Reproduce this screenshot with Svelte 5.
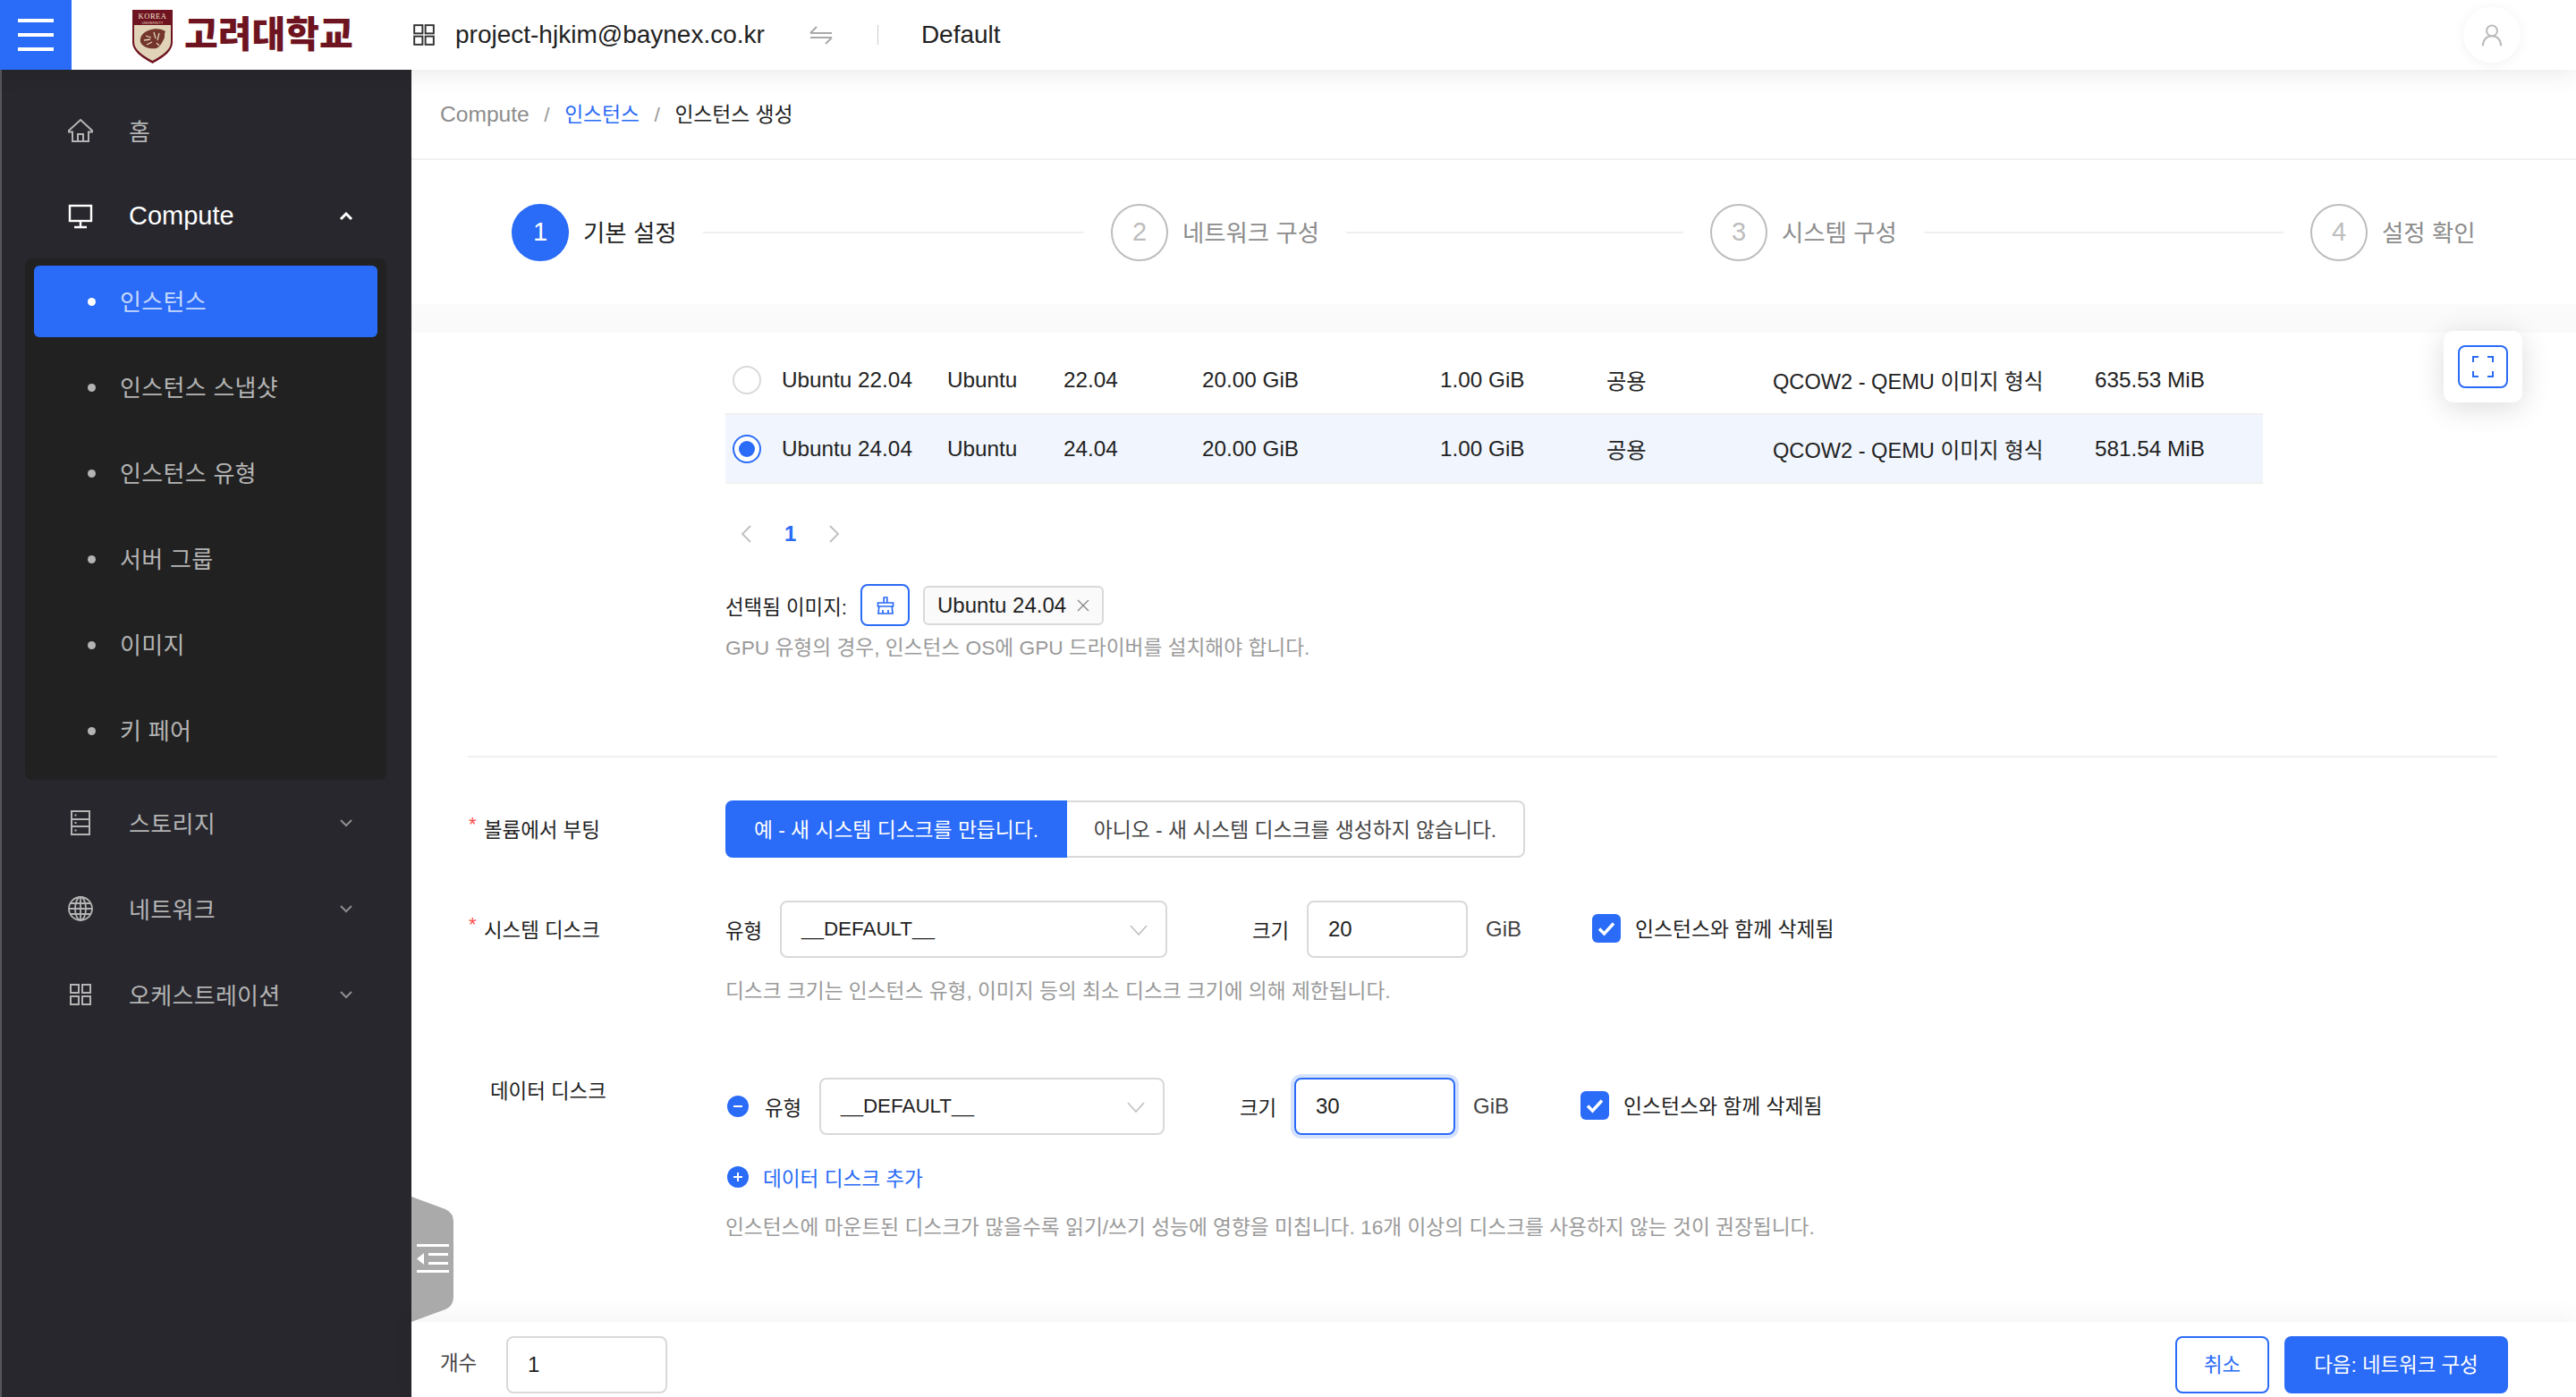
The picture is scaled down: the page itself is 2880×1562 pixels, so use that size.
<script lang="ts">
	const subItems = ['인스턴스', '인스턴스 스냅샷', '인스턴스 유형', '서버 그룹', '이미지', '키 페어'];

	const steps = [
		{ n: 1, label: '기본 설정' },
		{ n: 2, label: '네트워크 구성' },
		{ n: 3, label: '시스템 구성' },
		{ n: 4, label: '설정 확인' }
	];

	const images = [
		{ name: 'Ubuntu 22.04', os: 'Ubuntu', ver: '22.04', disk: '20.00 GiB', mem: '1.00 GiB', vis: '공용', format: 'QCOW2 - QEMU 이미지 형식', size: '635.53 MiB', checked: false },
		{ name: 'Ubuntu 24.04', os: 'Ubuntu', ver: '24.04', disk: '20.00 GiB', mem: '1.00 GiB', vis: '공용', format: 'QCOW2 - QEMU 이미지 형식', size: '581.54 MiB', checked: true }
	];
</script>

{#snippet chevron(up: boolean)}
	<svg class="chev" class:chev--up={up} viewBox="0 0 16 10" fill="none" stroke="currentColor" stroke-width="2"><path d={up ? 'M2 8l6-6 6 6' : 'M2 2l6 6 6-6'} /></svg>
{/snippet}

{#snippet appsIcon()}
	<svg class="menu-icon" viewBox="0 0 28 28" fill="none" stroke="currentColor" stroke-width="2"><rect x="3" y="3" width="9" height="9" /><rect x="16" y="3" width="9" height="9" /><rect x="3" y="16" width="9" height="9" /><rect x="16" y="16" width="9" height="9" /></svg>
{/snippet}

{#snippet checkbox()}
	<span class="checkbox"><svg viewBox="0 0 32 32" fill="none" stroke="#fff" stroke-width="3.4"><path d="M8 16.5l5.5 5.5L24 10.5" /></svg></span>
{/snippet}

{#snippet selectBox(cls: string)}
	<div class="select {cls}">
		<span>__DEFAULT__</span>
		<svg viewBox="0 0 20 12" fill="none" stroke="#bfbfbf" stroke-width="1.6"><path d="M1 1l9 10 9-10" /></svg>
	</div>
{/snippet}

<div class="page">
	<header class="topbar">
		<button class="burger" aria-label="menu"><i></i><i></i><i></i></button>
		<div class="logo">
			<svg class="shield" viewBox="0 0 45 60">
				<path d="M0 0H45V36C45 47 33 54 22.500 60C12 54 0 47 0 36Z" fill="#6e1420" />
				<path d="M2 17H43V36C43 45.500 32 51.500 22.500 57C13 51.500 2 45.500 2 36Z" fill="#e0d3b8" />
				<text x="22.500" y="10" text-anchor="middle" class="shield-korea">KOREA</text>
				<text x="22.500" y="15.500" text-anchor="middle" class="shield-univ">UNIVERSITY</text>
				<path d="M9 36C8 30 12 25 18 23C25 20 33 21 37 24C35 27 37 30 35 33C33 37 31 41 27 43C22 44 12 43 9 36Z" fill="#74352c" />
				<path d="M15 29l6 2M13 34l7-1M16 39l6-3M24 25l2 7M30 26l-2 8M27 37l3 3" stroke="#e0d3b8" stroke-width="1.300" fill="none" />
			</svg>
			<span class="wordmark">고려대학교</span>
		</div>
		<svg class="project-icon" viewBox="0 0 24 24" fill="none" stroke="#333" stroke-width="1.800"><rect x="2" y="2" width="8.500" height="8.500" /><rect x="13.500" y="2" width="8.500" height="8.500" /><rect x="2" y="13.500" width="8.500" height="8.500" /><rect x="13.500" y="13.500" width="8.500" height="8.500" /></svg>
		<span class="project">project-hjkim@baynex.co.kr</span>
		<svg class="swap" viewBox="0 0 26 22" fill="none" stroke="#aaa" stroke-width="2"><path d="M1 9H25M1 9L8 2M25 14H1M25 14l-7 7" /></svg>
		<span class="bar-sep"></span>
		<span class="domain">Default</span>
		<span class="avatar">
			<svg viewBox="0 0 28 32" fill="none" stroke="#bbb" stroke-width="2.400"><circle cx="14" cy="10" r="7" /><path d="M2 30c0-8 5-13 12-13s12 5 12 13" /></svg>
		</span>
	</header>

	<div class="body">
		<aside class="sidebar">
			<div class="menu-item home">
				<svg class="menu-icon" viewBox="0 0 28 28" fill="none" stroke="currentColor" stroke-width="2"><path d="M14 2L27 14v1.500h-4V26H5V15.500H1V14ZM11 26v-8h6v8" /></svg>
				<span>홈</span>
			</div>
			<div class="menu-item compute">
				<svg class="menu-icon" viewBox="0 0 28 28" fill="none" stroke="currentColor" stroke-width="2.400"><rect x="2" y="2" width="24" height="17" /><path d="M14 19v6M7 26h14" /></svg>
				<span>Compute</span>
				{@render chevron(true)}
			</div>
			<ul class="submenu">
				{#each subItems as item, i (item)}
					<li class="sub-item" class:sub-item--active={i === 0}><i class="dot"></i>{item}</li>
				{/each}
			</ul>
			<div class="menu-item">
				<svg class="menu-icon" viewBox="0 0 28 28" fill="none" stroke="currentColor" stroke-width="2"><rect x="4" y="1" width="20" height="26" /><path d="M4 10h20M4 18h20M7.500 5.500h2M7.500 14h2M7.500 22.500h2" /></svg>
				<span>스토리지</span>
				{@render chevron(false)}
			</div>
			<div class="menu-item">
				<svg class="menu-icon" viewBox="0 0 28 28" fill="none" stroke="currentColor" stroke-width="1.800"><circle cx="14" cy="14" r="13" /><ellipse cx="14" cy="14" rx="6" ry="13" /><path d="M14 1v26M1 14h26M3 8h22M3 20h22" /></svg>
				<span>네트워크</span>
				{@render chevron(false)}
			</div>
			<div class="menu-item">
				{@render appsIcon()}
				<span>오케스트레이션</span>
				{@render chevron(false)}
			</div>
		</aside>

		<main class="main">
			<nav class="crumbs">
				<span class="crumb-muted">Compute</span>
				<span class="crumb-sep">/</span>
				<span class="crumb-link">인스턴스</span>
				<span class="crumb-sep">/</span>
				<span>인스턴스 생성</span>
			</nav>

			<div class="steps">
				{#each steps as step (step.n)}
					<div class="step" class:step--active={step.n === 1}>
						<span class="step-num">{step.n}</span>
						<span class="step-label">{step.label}</span>
						{#if step.n < 4}<span class="step-line"></span>{/if}
					</div>
				{/each}
			</div>
			<div class="band"></div>

			<div class="content">
				<div class="image-block">
					{#each images as img (img.name)}
						<div class="img-row" class:img-row--selected={img.checked}>
							<span class="radio" class:radio--on={img.checked}></span>
							<span>{img.name}</span>
							<span>{img.os}</span>
							<span>{img.ver}</span>
							<span>{img.disk}</span>
							<span>{img.mem}</span>
							<span>{img.vis}</span>
							<span class="img-format">{img.format}</span>
							<span>{img.size}</span>
						</div>
					{/each}

					<div class="pager">
						<svg viewBox="0 0 14 22" fill="none" stroke="#bfbfbf" stroke-width="1.800"><path d="M12 2L3 11l9 9" /></svg>
						<span>1</span>
						<svg viewBox="0 0 14 22" fill="none" stroke="#bfbfbf" stroke-width="1.800"><path d="M2 2l9 9-9 9" /></svg>
					</div>

					<div class="selected">
						<span class="selected-label">선택됨 이미지:</span>
						<button class="clear-btn" aria-label="clear">
							<svg viewBox="0 0 20 20" fill="none" stroke="#2a6bf7" stroke-width="1.700"><path d="M8.200 7V1h3.600v6M1.500 7h17v4h-17zM2.800 11L2 19h16l-.8-8M7 19v-4M13 19v-4" /></svg>
						</button>
						<span class="tag">Ubuntu 24.04
							<svg viewBox="0 0 14 14" stroke="#888" stroke-width="1.400"><path d="M1 1l12 12M13 1L1 13" /></svg>
						</span>
					</div>
					<p class="help help--gpu">GPU 유형의 경우, 인스턴스 OS에 GPU 드라이버를 설치해야 합니다.</p>
				</div>

				<div class="divider"></div>

				<div class="form-row form-row--boot">
					<label class="req">볼륨에서 부팅</label>
					<div class="radio-group">
						<span class="seg seg--on">예 - 새 시스템 디스크를 만듭니다.</span>
						<span class="seg">아니오 - 새 시스템 디스크를 생성하지 않습니다.</span>
					</div>
				</div>

				<div class="form-row form-row--system">
					<label class="req">시스템 디스크</label>
					<div class="disk">
						<span class="disk-label">유형</span>
						{@render selectBox('select--system')}
						<span class="disk-label size-label">크기</span>
						<div class="input">20</div>
						<span class="unit">GiB</span>
						{@render checkbox()}
						<span class="check-label">인스턴스와 함께 삭제됨</span>
					</div>
					<p class="help help--system">디스크 크기는 인스턴스 유형, 이미지 등의 최소 디스크 크기에 의해 제한됩니다.</p>
				</div>

				<div class="form-row form-row--data">
					<label class="plain">데이터 디스크</label>
					<div class="disk disk--data">
						<span class="round"><i></i></span>
						<span class="disk-label">유형</span>
						{@render selectBox('select--data')}
						<span class="disk-label size-label">크기</span>
						<div class="input input--focus">30</div>
						<span class="unit">GiB</span>
						{@render checkbox()}
						<span class="check-label">인스턴스와 함께 삭제됨</span>
					</div>
					<div class="add-disk"><span class="round round--plus"><i></i></span>데이터 디스크 추가</div>
					<p class="help help--data">인스턴스에 마운트된 디스크가 많을수록 읽기/쓰기 성능에 영향을 미칩니다. 16개 이상의 디스크를 사용하지 않는 것이 권장됩니다.</p>
				</div>
			</div>

			<footer class="footer">
				<span class="count-label">개수</span>
				<div class="input input--count">1</div>
				<button class="btn btn--ghost">취소</button>
				<button class="btn btn--primary">다음: 네트워크 구성</button>
			</footer>

			<svg class="collapse" viewBox="0 0 47 140">
				<path d="M0 0L38 14Q47 18 47 28V112Q47 122 38 126L0 140Z" fill="#aaa" />
				<path d="M6 54.500H42M19 64.500H41M19 74.500H41M6 83.500H42" stroke="#fff" stroke-width="3" />
				<path d="M6 69.500l8-6.500v13z" fill="#fff" />
			</svg>

			<div class="float-card">
				<button class="float-btn" aria-label="fullscreen">
					<svg viewBox="0 0 24 24" fill="none" stroke="#2a6bf7" stroke-width="2"><path d="M1 7V1h6M17 1h6v6M23 17v6h-6M7 23H1v-6" /></svg>
				</button>
			</div>
		</main>
	</div>
</div>

<style>
	:global(body) {
		margin: 0;
		background: #fff;
	}
	.page {
		width: 2880px;
		height: 1562px;
		display: flex;
		flex-direction: column;
		overflow: hidden;
		font-family: 'Liberation Sans', 'Noto Sans CJK KR', sans-serif;
		font-size: 24.300px;
		color: #222;
	}
	.topbar {
		height: 78px;
		flex-shrink: 0;
		display: flex;
		align-items: center;
		background: #fff;
		position: relative;
		z-index: 2;
		box-shadow: 0 4px 28px rgba(0, 0, 0, 0.09);
		font-size: 28px;
	}
	.burger {
		width: 80px;
		height: 78px;
		flex-shrink: 0;
		border: none;
		padding: 0 20px;
		background: #2a6bf7;
		display: flex;
		flex-direction: column;
		justify-content: center;
		gap: 12px;
	}
	.burger i {
		display: block;
		height: 4px;
		background: #fff;
	}
	.logo {
		display: flex;
		align-items: center;
		gap: 13px;
		margin-left: 68px;
		width: 313px;
		flex-shrink: 0;
	}
	.shield {
		width: 45px;
		height: 60px;
		margin-top: 4px;
		flex-shrink: 0;
	}
	.shield-korea {
		font-size: 8.500px;
		fill: #f0e6d2;
		font-family: 'Liberation Serif', serif;
		letter-spacing: 0.5px;
	}
	.shield-univ {
		font-size: 4px;
		fill: #e0d3b8;
		font-family: 'Liberation Sans', sans-serif;
	}
	.wordmark {
		font-size: 41px;
		font-weight: 900;
		color: #6e1420;
		line-height: 1;
		white-space: nowrap;
	}
	.project-icon {
		width: 26px;
		height: 26px;
		flex-shrink: 0;
	}
	.project {
		margin-left: 22px;
	}
	.swap {
		width: 26px;
		height: 22px;
		margin-left: 50px;
	}
	.bar-sep {
		width: 1px;
		height: 22px;
		background: #ccc;
		margin-left: 50px;
	}
	.domain {
		margin-left: 48px;
	}
	.avatar {
		width: 64px;
		height: 62px;
		border-radius: 50%;
		margin-left: auto;
		margin-right: 62px;
		display: flex;
		align-items: center;
		justify-content: center;
		box-shadow: 0 2px 14px rgba(0, 0, 0, 0.06);
	}
	.avatar svg {
		width: 24px;
		height: 27px;
	}
	.body {
		flex: 1;
		display: flex;
		min-height: 0;
	}
	.sidebar {
		width: 458px;
		flex-shrink: 0;
		background: #27272d;
		border-left: 2px solid #55555c;
		color: #b4b4b4;
		font-size: 26px;
		padding-top: 20px;
		box-sizing: content-box;
	}
	.menu-item {
		height: 96px;
		display: flex;
		align-items: center;
		position: relative;
		padding-left: 74px;
		letter-spacing: 0.3px;
	}
	.menu-item > span {
		padding-bottom: 2px;
	}
	.menu-icon {
		width: 28px;
		height: 28px;
		flex-shrink: 0;
		margin-right: 40px;
	}
	.compute {
		color: #fff;
		font-size: 29px;
		letter-spacing: 0;
	}
	.chev {
		position: absolute;
		left: 377px;
		width: 16px;
		height: 10px;
		color: #8f8f8f;
	}
	.chev--up {
		color: #fff;
		stroke-width: 3;
	}
	.submenu {
		list-style: none;
		margin: -1px 26px 0;
		padding: 8px 10px 15px;
		background: #212121;
		border-radius: 8px;
		width: 384px;
	}
	.sub-item {
		height: 80px;
		margin-bottom: 16px;
		display: flex;
		align-items: center;
		padding: 0 0 3px 96px;
		box-sizing: border-box;
		border-radius: 6px;
		position: relative;
		letter-spacing: 0.3px;
	}
	.sub-item:last-child {
		margin-bottom: 0;
	}
	.sub-item--active {
		background: #2a6bf7;
		color: #c6d9fd;
	}
	.sub-item--active .dot {
		background: #fff;
	}
	.dot {
		position: absolute;
		left: 60px;
		top: 36px;
		width: 9px;
		height: 9px;
		border-radius: 50%;
		background: #b4b4b4;
	}
	.main {
		flex: 1;
		min-width: 0;
		display: flex;
		flex-direction: column;
		position: relative;
	}
	.crumbs {
		height: 101px;
		flex-shrink: 0;
		box-sizing: border-box;
		border-bottom: 2px solid #f0f0f0;
		padding: 30px 32px 0;
		display: flex;
		gap: 16.500px;
		font-size: 22.800px;
		line-height: 40px;
		color: #222;
	}
	.crumb-muted {
		font-size: 24.600px;
		color: #8c8c8c;
	}
	.crumb-sep {
		color: #999;
	}
	.crumb-link {
		color: #2a6bf7;
	}
	.steps {
		height: 161px;
		flex-shrink: 0;
		box-sizing: border-box;
		padding: 0 113px 0 112px;
		display: grid;
		grid-template-columns: 670px 670px 671px auto;
		align-items: center;
	}
	.step {
		display: flex;
		align-items: center;
		font-size: 26.400px;
		color: #8c8c8c;
	}
	.step-num {
		width: 64px;
		height: 64px;
		box-sizing: border-box;
		border-radius: 50%;
		border: 2px solid #bdbdbd;
		display: flex;
		align-items: center;
		justify-content: center;
		color: #bdbdbd;
		font-size: 29px;
		flex-shrink: 0;
	}
	.step-label {
		margin-left: 16px;
		padding-bottom: 2px;
		white-space: nowrap;
	}
	.step-line {
		flex: 1;
		height: 2px;
		background: #f0f0f0;
		margin: 0 30px;
	}
	.step--active {
		color: #222;
	}
	.step--active .step-num {
		background: #2a6bf7;
		border-color: #2a6bf7;
		color: #fff;
	}
	.band {
		height: 32px;
		flex-shrink: 0;
		background: #fafafa;
	}
	.content {
		flex: 1;
		min-height: 0;
		overflow: hidden;
		padding-top: 15px;
	}
	.image-block {
		margin-left: 351px;
		width: 1719px;
	}
	.img-row {
		height: 77px;
		box-sizing: border-box;
		display: grid;
		grid-template-columns: 63px 185px 130px 155px 266px 186px 186px 360px 1fr;
		align-items: center;
		border-bottom: 2px solid #f0f0f0;
		white-space: nowrap;
	}
	.img-row--selected {
		background: #f1f6fe;
	}
	.img-format {
		font-size: 23.600px;
	}
	.radio {
		width: 32px;
		height: 32px;
		margin-left: 8px;
		box-sizing: border-box;
		border: 2px solid #d9d9d9;
		border-radius: 50%;
		background: #fff;
		position: relative;
	}
	.radio--on {
		border-color: #2a6bf7;
	}
	.radio--on::after {
		content: '';
		position: absolute;
		inset: 5px;
		border-radius: 50%;
		background: #2a6bf7;
	}
	.pager {
		height: 40px;
		margin-top: 36px;
		padding-left: 16px;
		display: flex;
		align-items: center;
		gap: 36px;
		color: #2a6bf7;
		font-weight: 700;
		font-size: 24px;
	}
	.pager svg {
		width: 14px;
		height: 22px;
	}
	.selected {
		margin-top: 36px;
		height: 47px;
		display: flex;
		align-items: center;
	}
	.selected-label {
		font-size: 22.400px;
		width: 151px;
		white-space: nowrap;
	}
	.clear-btn {
		width: 55px;
		height: 47px;
		padding: 0;
		background: #fff;
		border: 2px solid #2a6bf7;
		border-radius: 8px;
		display: flex;
		align-items: center;
		justify-content: center;
	}
	.clear-btn svg {
		width: 20px;
		height: 20px;
	}
	.tag {
		margin-left: 15px;
		width: 202px;
		height: 44px;
		box-sizing: border-box;
		padding: 0 14px;
		display: flex;
		align-items: center;
		justify-content: space-between;
		background: #fafafa;
		border: 2px solid #d9d9d9;
		border-radius: 6px;
		white-space: nowrap;
		font-size: 24px;
	}
	.tag svg {
		width: 14px;
		height: 14px;
	}
	.help {
		margin: 0;
		font-size: 22.700px;
		line-height: 32px;
		color: #9a9a9a;
		white-space: nowrap;
	}
	.help--gpu {
		margin-top: 8px;
	}
	.divider {
		height: 2px;
		margin: 105px 88px 0 63px;
		background: #f0f0f0;
	}
	.form-row {
		display: grid;
		grid-template-columns: 287px 1fr;
		padding-left: 64px;
		font-size: 22.400px;
		align-items: center;
	}
	.form-row > .help,
	.form-row > .add-disk {
		grid-column: 2;
	}
	.form-row label {
		white-space: nowrap;
		padding-bottom: 3px;
	}
	.req {
		position: relative;
		padding-left: 17px;
	}
	.req::before {
		content: '*';
		position: absolute;
		left: 0;
		top: -1px;
		color: #ff4d4f;
		font-size: 22px;
	}
	.plain {
		padding-left: 24px;
		padding-top: 2px;
		align-self: start;
		line-height: 28px;
	}
	.form-row--boot {
		margin-top: 48px;
		height: 64px;
	}
	.form-row--system {
		margin-top: 48px;
	}
	.form-row--data {
		margin-top: 81px;
	}
	.radio-group {
		display: flex;
		height: 64px;
		font-size: 22.800px;
	}
	.seg {
		height: 64px;
		box-sizing: border-box;
		display: flex;
		align-items: center;
		justify-content: center;
		border: 2px solid #d9d9d9;
		border-left: none;
		border-radius: 0 8px 8px 0;
		width: 512px;
		white-space: nowrap;
		color: #444;
		padding-bottom: 2px;
	}
	.seg--on {
		width: 382px;
		background: #2a6bf7;
		border: none;
		border-radius: 8px 0 0 8px;
		color: #fff;
	}
	.disk {
		display: flex;
		align-items: center;
		height: 64px;
		white-space: nowrap;
	}
	.disk-label {
		width: 40px;
		flex-shrink: 0;
		margin-right: 21px;
	}
	.select {
		height: 64px;
		box-sizing: border-box;
		border: 2px solid #d9d9d9;
		border-radius: 8px;
		padding: 0 20px 0 22px;
		display: flex;
		align-items: center;
		justify-content: space-between;
		flex-shrink: 0;
		background: #fff;
	}
	.select svg {
		width: 20px;
		height: 12px;
		margin-top: 2px;
	}
	.select--system {
		width: 433px;
	}
	.select--data {
		width: 386px;
	}
	.size-label {
		margin-left: 95px;
	}
	.disk--data .size-label {
		margin-left: 84px;
	}
	.input {
		width: 180px;
		height: 64px;
		box-sizing: border-box;
		border: 2px solid #d9d9d9;
		border-radius: 8px;
		padding-left: 22px;
		display: flex;
		align-items: center;
		flex-shrink: 0;
		font-size: 24px;
	}
	.input--focus {
		border-color: #2a6bf7;
		box-shadow: 0 0 0 4px #d4e2fd;
	}
	.unit {
		margin-left: 20px;
		width: 119px;
		flex-shrink: 0;
		font-size: 24px;
		color: #444;
	}
	.disk--data .unit {
		width: 120px;
	}
	.checkbox {
		width: 32px;
		height: 32px;
		flex-shrink: 0;
		margin-bottom: 3px;
		border-radius: 6px;
		background: #2a6bf7;
	}
	.checkbox svg {
		display: block;
		width: 32px;
		height: 32px;
	}
	.check-label {
		margin-left: 16px;
		padding-bottom: 4px;
		font-size: 22.800px;
	}
	.help--system {
		margin-top: 21px;
	}
	.round {
		width: 24px;
		height: 24px;
		border-radius: 50%;
		background: #2a6bf7;
		margin: 0 18px 0 2px;
		position: relative;
		flex-shrink: 0;
	}
	.round i::before,
	.round--plus i::after {
		content: '';
		position: absolute;
		background: #fff;
		left: 7px;
		top: 11px;
		width: 10px;
		height: 2px;
	}
	.round--plus i::after {
		left: 11px;
		top: 7px;
		width: 2px;
		height: 10px;
	}
	.add-disk {
		margin-top: 31px;
		height: 32px;
		display: flex;
		align-items: center;
		color: #2a6bf7;
		font-size: 22.600px;
	}
	.add-disk .round {
		margin-right: 16px;
	}
	.help--data {
		margin-top: 24px;
	}
	.footer {
		height: 84px;
		flex-shrink: 0;
		box-sizing: border-box;
		padding: 16px 76px 0 32px;
		background: #fff;
		display: flex;
		align-items: flex-start;
		position: relative;
		box-shadow: 0 -6px 24px rgba(0, 0, 0, 0.05);
		font-size: 24px;
	}
	.count-label {
		width: 74px;
		line-height: 62px;
		font-size: 22.400px;
		color: #444;
	}
	.btn {
		height: 64px;
		box-sizing: border-box;
		border-radius: 8px;
		font-family: inherit;
		font-size: 22.400px;
		padding: 0 0 4px;
	}
	.btn--ghost {
		margin-left: auto;
		width: 105px;
		background: #fff;
		border: 2px solid #2a6bf7;
		color: #2a6bf7;
	}
	.btn--primary {
		margin-left: 17px;
		width: 250px;
		background: #2a6bf7;
		border: none;
		color: #fff;
	}
	.collapse {
		position: absolute;
		left: 0;
		top: 1260px;
		width: 47px;
		height: 140px;
		z-index: 1;
	}
	.float-card {
		position: absolute;
		left: 2272px;
		top: 292px;
		width: 88px;
		height: 80px;
		background: #fff;
		border-radius: 10px;
		display: flex;
		align-items: center;
		justify-content: center;
		box-shadow: 0 6px 32px rgba(0, 0, 0, 0.14);
	}
	.float-btn {
		width: 56px;
		height: 48px;
		padding: 0;
		background: #fff;
		border: 2px solid #2a6bf7;
		border-radius: 8px;
		display: flex;
		align-items: center;
		justify-content: center;
	}
	.float-btn svg {
		width: 24px;
		height: 24px;
	}
</style>
